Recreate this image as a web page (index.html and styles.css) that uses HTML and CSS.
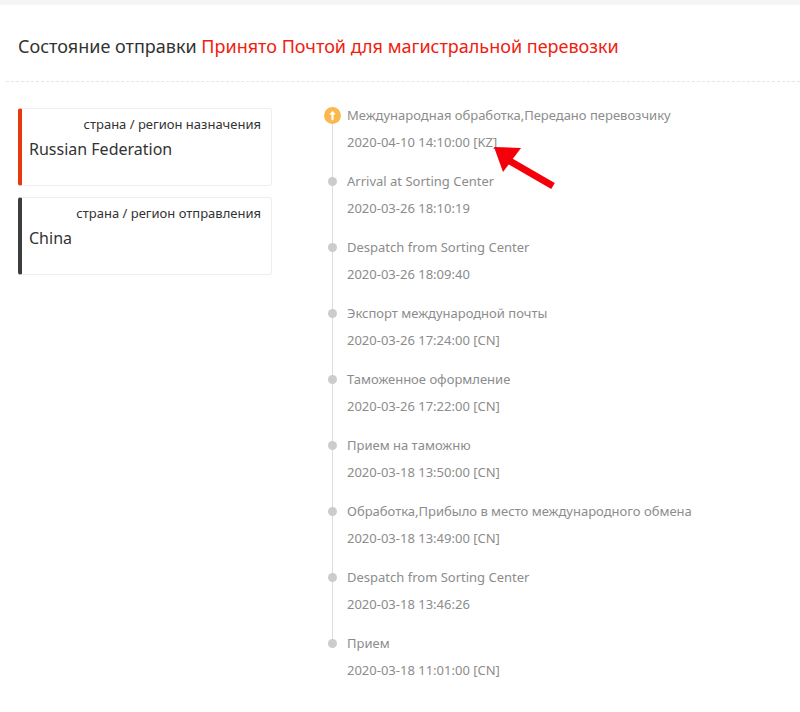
FILE: index.html
```html
<!DOCTYPE html>
<html>
	<head>
		<meta charset="utf-8">
		<title>Состояние отправки</title>
		<link rel="stylesheet" href="styles.css">
	</head>
	<body>
		<div class="topbar"></div>

		<div class="header">
			<h2>Состояние отправки <span class="status">Принято Почтой для магистральной перевозки</span></h2>
		</div>

		<div class="content">
			<div class="side">
				<div class="card card-to">
					<p class="card-label">страна / регион назначения</p>
					<p class="card-title">Russian Federation</p>
				</div>
				<div class="card card-from">
					<p class="card-label">страна / регион отправления</p>
					<p class="card-title">China</p>
				</div>
			</div>

			<ul class="timeline">
				<li class="first">
					<span class="mark">
						<svg width="17" height="17" viewBox="0 0 16 16">
							<circle cx="8" cy="8" r="8" fill="#fbb84e"/>
							<path d="M8 3.5 L11 7 H9 V12.5 H7 V7 H5 Z" fill="#fff"/>
						</svg>
					</span>
					<p class="ev">Международная обработка,Передано перевозчику</p>
					<p class="dt">2020-04-10 14:10:00 [KZ]</p>
					<svg class="pointer" width="70" height="52" viewBox="0 0 70 52">
						<line x1="18" y1="20" x2="63" y2="46" stroke="#f5000a" stroke-width="7"/>
						<polygon points="4,7 31,8 13,32" fill="#f5000a"/>
					</svg>
				</li>
				<li>
					<span class="dot"></span>
					<p class="ev">Arrival at Sorting Center</p>
					<p class="dt">2020-03-26 18:10:19</p>
				</li>
				<li>
					<span class="dot"></span>
					<p class="ev">Despatch from Sorting Center</p>
					<p class="dt">2020-03-26 18:09:40</p>
				</li>
				<li>
					<span class="dot"></span>
					<p class="ev">Экспорт международной почты</p>
					<p class="dt">2020-03-26 17:24:00 [CN]</p>
				</li>
				<li>
					<span class="dot"></span>
					<p class="ev">Таможенное оформление</p>
					<p class="dt">2020-03-26 17:22:00 [CN]</p>
				</li>
				<li>
					<span class="dot"></span>
					<p class="ev">Прием на таможню</p>
					<p class="dt">2020-03-18 13:50:00 [CN]</p>
				</li>
				<li>
					<span class="dot"></span>
					<p class="ev">Обработка,Прибыло в место международного обмена</p>
					<p class="dt">2020-03-18 13:49:00 [CN]</p>
				</li>
				<li>
					<span class="dot"></span>
					<p class="ev">Despatch from Sorting Center</p>
					<p class="dt">2020-03-18 13:46:26</p>
				</li>
				<li class="last">
					<span class="dot"></span>
					<p class="ev">Прием</p>
					<p class="dt">2020-03-18 11:01:00 [CN]</p>
				</li>
			</ul>
		</div>
	</body>
</html>
```

FILE: styles.css
```css
* {
	margin: 0;
	padding: 0;
}

body {
	background-color: #fff;
	font-family: "Noto Sans", "Liberation Sans", sans-serif;
	color: #333;
}

li {
	list-style: none;
}

.topbar {
	height: 5px;
	background-color: #f5f5f5;
}

.header {
	margin-left: 6px;
	padding: 29px 0 23px 12px;
	border-bottom: 1px dashed #e6e6e6;
}

.header h2 {
	font-size: 18px;
	font-weight: normal;
	line-height: 24px;
	color: #333;
}

.status {
	color: #f0200f;
}

.content {
	display: flex;
	align-items: flex-start;
}

.side {
	width: 254px;
	margin: 26px 0 0 18px;
}

.card {
	border: 1px solid #eee;
	border-left: 4px solid #e8380d;
	border-radius: 3px;
	padding: 5px 10px 24px 7px;
	margin-bottom: 11px;
}

.card-from {
	border-left-color: #3d3d3d;
}

.card-label {
	font-size: 13px;
	line-height: 20px;
	text-align: right;
}

.card-title {
	font-size: 16px;
	line-height: 24px;
	margin-top: 3px;
}

.timeline {
	margin: 23px 0 0 55px;
}

.timeline li {
	position: relative;
	padding: 0 0 19px 20px;
}

.timeline li::before {
	content: "";
	position: absolute;
	left: 5px;
	top: 0;
	bottom: 0;
	width: 1px;
	background-color: #ddd;
}

.timeline li.first::before {
	top: 10px;
}

.timeline li.last::before {
	bottom: auto;
	height: 10px;
}

.ev,
.dt {
	font-size: 13px;
	line-height: 20px;
	color: #8c8c8c;
}

.dt {
	margin-top: 7px;
}

.dot {
	position: absolute;
	left: 1px;
	top: 6px;
	width: 9px;
	height: 9px;
	border-radius: 50%;
	background-color: #ccc;
}

.mark {
	position: absolute;
	left: -3px;
	top: 2px;
	width: 17px;
	height: 17px;
}

.mark svg {
	display: block;
}

.pointer {
	position: absolute;
	left: 163px;
	top: 35px;
}
```
